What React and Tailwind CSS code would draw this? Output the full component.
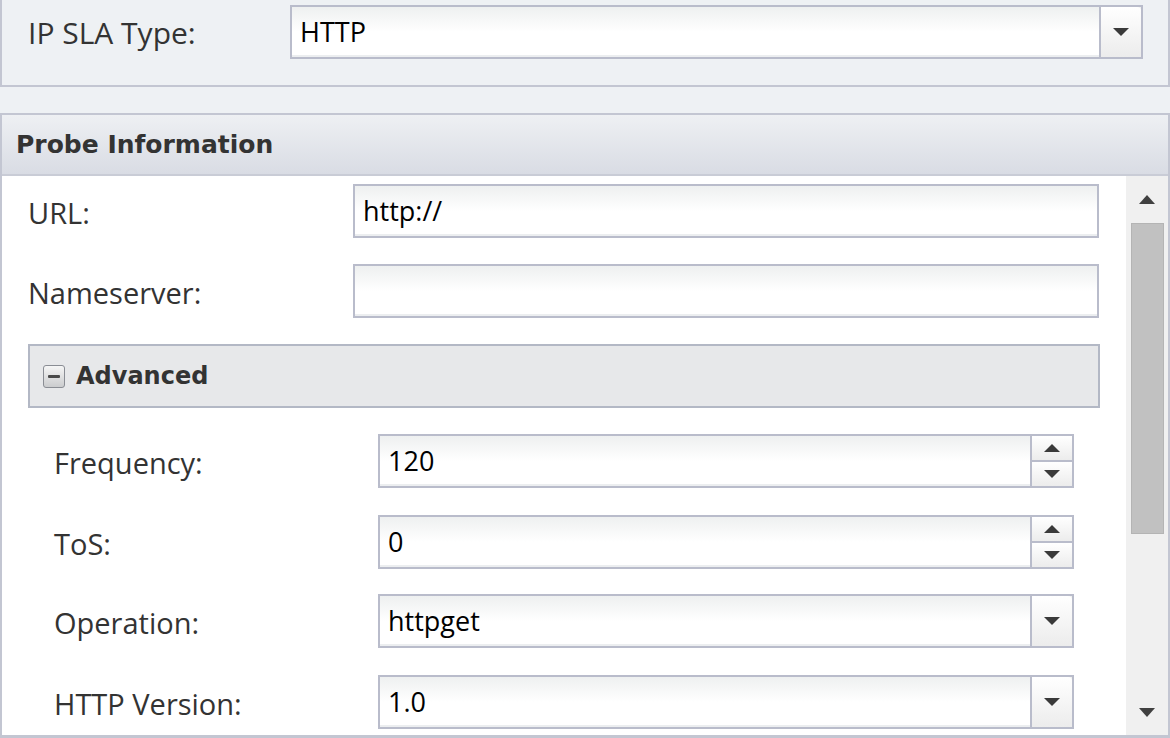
import React from "react";

const labelFont = { fontFamily: '"Open Sans", "Noto Sans", sans-serif' };
const boldFont = { fontFamily: '"DejaVu Sans", "Noto Sans", sans-serif' };

function DownTri({ w = 16, h = 8 }) {
  return (
    <svg width={w} height={h} viewBox={`0 0 ${w} ${h}`}>
      <path d={`M0 0 H${w} L${w / 2} ${h} Z`} fill="#3a3a3a" />
    </svg>
  );
}
function UpTri({ w = 16, h = 8 }) {
  return (
    <svg width={w} height={h} viewBox={`0 0 ${w} ${h}`}>
      <path d={`M0 ${h} H${w} L${w / 2} 0 Z`} fill="#3a3a3a" />
    </svg>
  );
}

function TextBox({ value, w, children }) {
  return (
    <div
      className={`${w} h-[54px] flex border-2 border-[#b9bccb] bg-gradient-to-b from-[#eef0f0] via-white to-white`}
    >
      <div
        className="flex-1 flex items-center pl-[8px] text-[27px] leading-none text-black border-b-2 border-b-[#eceef0]"
        style={labelFont}
      >
        {value}
      </div>
      {children}
    </div>
  );
}

function ComboBtn() {
  return (
    <div className="w-[42px] h-full border-l-2 border-[#b9bccb] bg-gradient-to-b from-white to-[#ececec] flex items-center justify-center rounded-tr-[4px]">
      <DownTri w={16} h={8} />
    </div>
  );
}

function SpinBtn() {
  return (
    <div className="w-[42px] h-full border-l-2 border-[#b9bccb] flex flex-col rounded-tr-[4px]">
      <div className="flex-1 flex items-center justify-center bg-gradient-to-b from-white to-[#ececec] border-b-2 border-[#b9bccb]">
        <UpTri w={16} h={8} />
      </div>
      <div className="flex-1 flex items-center justify-center bg-gradient-to-b from-white to-[#ececec]">
        <DownTri w={16} h={8} />
      </div>
    </div>
  );
}

function Row({ label, children, labelW, className = "" }) {
  return (
    <div className={`flex items-center ${className}`}>
      <div className={`${labelW} text-[29px] leading-none text-[#333] pt-[3px]`} style={labelFont}>
        {label}
      </div>
      {children}
    </div>
  );
}

export default function App() {
  return (
    <div className="w-[1170px] h-[738px] bg-[#eef1f4] overflow-hidden flex flex-col">
      {/* Top panel */}
      <div className="h-[87px] border-l-2 border-r-2 border-b-2 border-[#c3c6d2] flex items-start pt-[5px] shrink-0">
        <div
          className="w-[288px] pl-[26px] h-[54px] pt-[2px] flex items-center text-[30px] leading-none text-[#333]"
          style={labelFont}
        >
          IP SLA Type:
        </div>
        <TextBox value="HTTP" w="w-[853px]">
          <ComboBtn />
        </TextBox>
      </div>

      {/* Probe Information panel */}
      <div className="mt-[26px] h-[625px] border-2 border-[#c3c6d2] border-b-[3px] flex flex-col shrink-0">
        <div className="h-[61px] shrink-0 bg-gradient-to-b from-[#eef0f3] to-[#d9dce4] border-b-2 border-[#c9ccd6] flex items-center pl-[14px]">
          <span className="text-[25px] leading-none font-bold text-[#333]" style={boldFont}>
            Probe Information
          </span>
        </div>
        <div className="flex-1 flex bg-white overflow-hidden">
          <div className="flex-1 flex flex-col pt-[8px] pl-[26px]">
            <Row label="URL:" labelW="w-[325px]">
              <TextBox value="http://" w="w-[746px]" />
            </Row>
            <Row label="Nameserver:" labelW="w-[325px]" className="mt-[26px]">
              <TextBox value="" w="w-[746px]" />
            </Row>
            <div className="mt-[26px] w-[1072px] h-[64px] bg-[#e7e8ea] border-2 border-[#b3b8c5] flex items-center pl-[13px]">
              <div className="w-[22px] h-[23px] rounded-[3px] border border-[#8a8d94] bg-gradient-to-b from-[#f6f6f6] to-[#cbccce] flex items-center justify-center">
                <div className="w-[12px] h-[3px] bg-[#4a4a4a] rounded-[1px]" />
              </div>
              <span className="ml-[11px] text-[24px] leading-none font-bold text-[#333]" style={boldFont}>
                Advanced
              </span>
            </div>
            <div className="pl-[26px] flex flex-col">
              <Row label="Frequency:" labelW="w-[324px]" className="mt-[26px]">
                <TextBox value="120" w="w-[696px]">
                  <SpinBtn />
                </TextBox>
              </Row>
              <Row label="ToS:" labelW="w-[324px]" className="mt-[27px]">
                <TextBox value="0" w="w-[696px]">
                  <SpinBtn />
                </TextBox>
              </Row>
              <Row label="Operation:" labelW="w-[324px]" className="mt-[25px]">
                <TextBox value="httpget" w="w-[696px]">
                  <ComboBtn />
                </TextBox>
              </Row>
              <Row label="HTTP Version:" labelW="w-[324px]" className="mt-[27px]">
                <TextBox value="1.0" w="w-[696px]">
                  <ComboBtn />
                </TextBox>
              </Row>
            </div>
          </div>
          {/* scrollbar */}
          <div className="w-[42px] bg-[#f0f0f0] flex flex-col items-center shrink-0">
            <div className="h-[47px] flex items-center justify-center">
              <svg width="16" height="9" viewBox="0 0 16 9">
                <path d="M0 9 H16 L8 0 Z" fill="#404040" />
              </svg>
            </div>
            <div className="w-[33px] h-[311px] bg-[#c1c1c1] border border-[#b4b4b4]" />
            <div className="flex-1" />
            <div className="h-[45px] flex items-center justify-center">
              <svg width="16" height="9" viewBox="0 0 16 9">
                <path d="M0 0 H16 L8 9 Z" fill="#404040" />
              </svg>
            </div>
          </div>
        </div>
      </div>
    </div>
  );
}
